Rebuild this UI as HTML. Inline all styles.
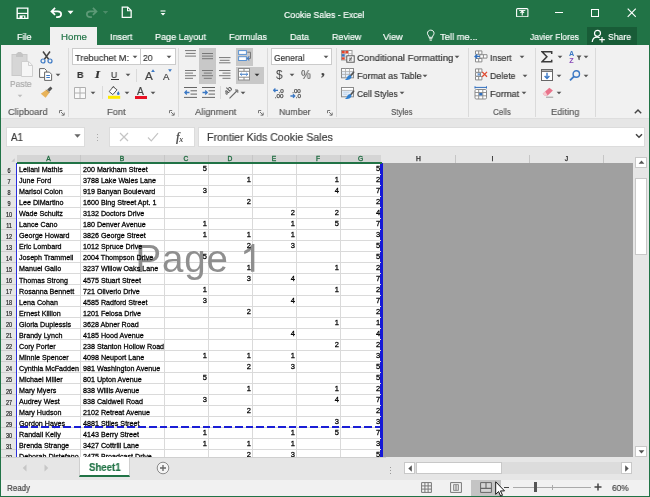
<!DOCTYPE html>
<html><head><meta charset="utf-8"><title>Cookie Sales - Excel</title>
<style>
html,body{margin:0;padding:0;}
body{width:650px;height:497px;overflow:hidden;background:#217346;font-family:"Liberation Sans",sans-serif;}
#win{position:absolute;left:0;top:0;width:650px;height:497px;overflow:hidden;background:#217346;}
.abs{position:absolute;}
/* title */
#title{position:absolute;left:0;top:0;width:650px;height:45px;background:#217346;}
.tt{position:absolute;color:#fff;font-size:11.5px;white-space:nowrap;line-height:14px;}
/* ribbon */
#ribbon{position:absolute;left:1px;top:45px;width:648px;height:73px;background:#f1f1f1;box-shadow:0 1px 0 #dedede;}
/* formula bar area */
#fbar{position:absolute;left:1px;top:118px;width:648px;height:35px;background:#e6e6e6;}
/* sheet area */
#sheet{position:absolute;left:1px;top:153px;width:648px;height:304px;background:#e6e6e6;}
#grid{position:absolute;left:0;top:0;width:650px;height:457px;overflow:hidden;pointer-events:none;}
.hl{position:absolute;left:18px;width:363px;height:1px;background:#dadada;}
.hh{position:absolute;left:1px;width:15px;height:1px;background:#cdcdcd;}
.vl{position:absolute;top:163px;width:1px;height:294px;background:#dadada;}
.rh{position:absolute;left:0.7px;width:16px;height:11px;line-height:12.5px;font-size:6.4px;text-align:center;color:#222;-webkit-text-stroke:0.2px #222;transform:scaleX(0.86);}
.c{position:absolute;height:11px;line-height:12.5px;font-size:7.7px;color:#000;white-space:nowrap;overflow:visible;-webkit-text-stroke:0.28px #000;transform:scaleX(0.93);transform-origin:0 50%;}
.ca{left:18.8px;width:65.5px;}
.cb{left:82.7px;width:88px;}
.n{text-align:right;transform-origin:100% 50%;font-size:8.1px;margin-top:-1.5px;}
.tab{position:absolute;top:29px;color:#fff;font-size:11.5px;line-height:14px;white-space:nowrap;}
#hometab{left:50px;top:27px;width:47px;height:19px;background:#f1f1f1;}
.ch{position:absolute;top:1px;height:9px;line-height:9px;font-size:6.7px;text-align:center;color:#222;-webkit-text-stroke:0.25px #222;}
.ch.sel{color:#1c6a3e;-webkit-text-stroke:0.3px #1c6a3e;}
.chs{position:absolute;top:2px;width:1px;height:8px;background:#c6c6c6;}
.sbtn{position:absolute;background:#fff;border:1px solid #c8c8c8;box-sizing:border-box;}
#tabbar{position:absolute;left:1px;top:457px;width:648px;height:23px;background:#e6e6e6;}
#status{position:absolute;left:1px;top:480px;width:648px;height:16px;background:#f1f1f1;}
.t{position:absolute;white-space:nowrap;line-height:14px;transform-origin:0 50%;-webkit-text-stroke-width:0.18px;}
#rb{position:absolute;left:0;top:0;width:650px;height:120px;}
.box{position:absolute;background:#fff;border:1px solid #cbcbcb;box-sizing:border-box;}
#wm{position:absolute;left:135.4px;top:237.7px;font-size:38.5px;line-height:42px;color:#8f8f8f;white-space:nowrap;letter-spacing:0.9px;word-spacing:-1px;}
#pb{position:absolute;left:20.2px;top:426px;width:360.5px;height:2px;background:repeating-linear-gradient(90deg,#1a1ed6 0,#1a1ed6 7.6px,transparent 7.6px,transparent 10.75px);}
#grid,#rb{will-change:transform;}
.t,.ch,.gs{will-change:transform;}

</style></head>
<body>
<div id="win">
<div id="title">
  <!-- QAT icons -->
  <svg class="abs" style="left:15.500px;top:6.500px" width="13" height="12.500" viewBox="0 0 13 12.500"><path d="M1.200 1.100h10.600v10.300H1.200z" fill="none" stroke="#fff" stroke-width="1.400"/><path d="M1.200 6.400h10.600" stroke="#fff" stroke-width="1.200"/><rect x="3.600" y="8.400" width="5.800" height="3" fill="#fff"/><rect x="6.600" y="9.200" width="1.500" height="1.800" fill="#217346"/></svg>
  <svg class="abs" style="left:48.500px;top:5.500px" width="15" height="14" viewBox="0 0 16 15"><path d="M6.500 2 2.600 5.800l3.900 3.800M2.800 5.800h6.400c2.400 0 3.800 1.400 3.800 3.100 0 1.900-1.500 3-3.800 3H7.600" fill="none" stroke="#fff" stroke-width="1.800" stroke-linejoin="miter"/></svg>
  <svg class="abs" style="left:67px;top:10px" width="7" height="5" viewBox="0 0 7 5"><path d="M.5.8h6L3.5 4.2z" fill="#fff"/></svg>
  <svg class="abs" style="left:84px;top:5.500px" width="15" height="14" viewBox="0 0 16 15"><path d="M9.500 2 13.400 5.800 9.500 9.600M13.200 5.800H6.800C4.400 5.800 3 7.200 3 8.900c0 1.900 1.500 3 3.800 3H8.400" fill="none" stroke="#5d9a77" stroke-width="1.800"/></svg>
  <svg class="abs" style="left:102px;top:10px" width="7" height="5" viewBox="0 0 7 5"><path d="M.8.900h5.400L3.500 4z" fill="#4c8c68"/></svg>
  <svg class="abs" style="left:121px;top:5.900px" width="11.500" height="12.500" viewBox="0 0 12 13"><path d="M1.300 1.200h5.700l3.600 3.600v7H1.300z" fill="none" stroke="#fff" stroke-width="1.300"/><path d="M6.800 1.400v3.600h3.600" fill="none" stroke="#fff" stroke-width="1.100"/></svg>
  <svg class="abs" style="left:159.300px;top:9.500px" width="8" height="7" viewBox="0 0 8 7"><path d="M1.500 1h5" stroke="#fff" stroke-width="1.100"/><path d="M1.600 2.900h4.800L4 5.600z" fill="#fff"/></svg>
  <span class="t" style="left:284.00px;top:8.10px;font-size:9.7px;color:#fff;transform:scaleX(0.899);">Cookie Sales - Excel</span>
  <!-- window buttons -->
  <svg class="abs" style="left:516.200px;top:7.800px" width="12.500" height="9.500" viewBox="0 0 12.500 9.500"><rect x=".6" y=".6" width="11.300" height="8.300" rx="1" fill="none" stroke="#fff" stroke-width="1.100"/><path d="M6.250 7.400V3.300M4.400 4.900 6.250 3.100l1.850 1.800" fill="none" stroke="#fff" stroke-width="1.100"/><path d="M3.200 2.500h6.100" stroke="#fff" stroke-width=".9"/></svg>
  <div class="abs" style="left:554.500px;top:12.100px;width:8.500px;height:1.100px;background:#fff"></div>
  <div class="abs" style="left:590.600px;top:8.600px;width:6.200px;height:6.200px;border:1.100px solid #fff"></div>
  <svg class="abs" style="left:626.500px;top:8px" width="9.500" height="9.500" viewBox="0 0 9.500 9.500"><path d="M.7.700l8.100 8.100M8.800.7.700 8.800" stroke="#fff" stroke-width="1.150"/></svg>
  <!-- tabs -->
  <div class="abs" id="hometab"></div>
  <span class="t" style="left:17.00px;top:29.80px;font-size:9.7px;color:#fff;transform:scaleX(0.928);">File</span>
  <span class="t" style="left:60.50px;top:29.80px;font-size:9.7px;color:#217346;">Home</span>
  <span class="t" style="left:109.50px;top:29.80px;font-size:9.7px;color:#fff;transform:scaleX(0.927);">Insert</span>
  <span class="t" style="left:155.00px;top:29.80px;font-size:9.7px;color:#fff;transform:scaleX(0.936);">Page Layout</span>
  <span class="t" style="left:229.00px;top:29.80px;font-size:9.7px;color:#fff;transform:scaleX(0.940);">Formulas</span>
  <span class="t" style="left:290.00px;top:29.80px;font-size:9.7px;color:#fff;transform:scaleX(0.927);">Data</span>
  <span class="t" style="left:331.70px;top:29.80px;font-size:9.7px;color:#fff;transform:scaleX(0.921);">Review</span>
  <span class="t" style="left:383.40px;top:29.80px;font-size:9.7px;color:#fff;transform:scaleX(0.950);">View</span>
  <svg class="abs" style="left:425.800px;top:29px" width="9.500" height="12.300" viewBox="0 0 10 13"><path d="M5 1.200c-2 0-3.500 1.500-3.500 3.300 0 1.300.8 2.200 1.500 3v1.300h4V7.500c.7-.8 1.500-1.700 1.500-3C8.500 2.700 7 1.200 5 1.200z" fill="none" stroke="#fff" stroke-width="1"/><path d="M3.300 10.300h3.400M3.800 11.800h2.400" stroke="#fff" stroke-width="1"/></svg>
  <span class="t" style="left:439.70px;top:29.80px;font-size:9.7px;color:#fff;transform:scaleX(0.969);">Tell me...</span>
  <span class="t" style="left:530.00px;top:29.80px;font-size:9.7px;color:#fff;transform:scaleX(0.883);">Javier Flores</span>
  <div class="abs" style="left:587px;top:27px;width:50px;height:18px;background:#185c37"></div>
  <svg class="abs" style="left:591px;top:29px" width="15" height="14" viewBox="0 0 15 14"><circle cx="6.500" cy="4.300" r="3" fill="none" stroke="#fff" stroke-width="1.200"/><path d="M1.200 13c.3-3 2.300-4.800 5-4.800 1 0 1.800.2 2.500.6" fill="none" stroke="#fff" stroke-width="1.200"/><path d="M11 8v5.500M8.300 10.700h5.500" stroke="#fff" stroke-width="1.200"/></svg>
  <span class="t" style="left:607.80px;top:29.80px;font-size:9.7px;color:#fff;transform:scaleX(0.889);">Share</span>
</div>

<div id="fbar">
  <div class="abs" style="left:5px;top:9px;width:78.500px;height:19.500px;background:#fff;border:1px solid #dcdcdc;box-sizing:border-box"></div>
  <svg class="abs" style="left:72.500px;top:16px" width="7" height="4" viewBox="0 0 7 4"><path d="M.4.300h6.200L3.500 3.700z" fill="#666"/></svg>
  <div class="abs" style="left:95.500px;top:15.5px;width:1.200px;height:1.200px;background:#aaa;box-shadow:0 3px #aaa,0 6px #aaa"></div>
  <div class="abs" style="left:108px;top:9px;width:86px;height:19.500px;background:#fff;border:1px solid #dcdcdc;box-sizing:border-box"></div>
  <svg class="abs" style="left:117.500px;top:14px" width="10" height="10" viewBox="0 0 10 10"><path d="M1 1l8 8M9 1 1 9" stroke="#c4c4c4" stroke-width="1.200"/></svg>
  <svg class="abs" style="left:145.500px;top:14px" width="12" height="10" viewBox="0 0 12 10"><path d="M1 5.500 4.300 8.800 11 1.200" fill="none" stroke="#c4c4c4" stroke-width="1.200"/></svg>
  <div class="abs gs" style="left:175px;top:12px;font-family:'Liberation Serif',serif;font-style:italic;font-weight:bold;font-size:11.500px;line-height:14px;color:#555">f<span style="font-size:8px;position:relative;top:1px;left:-0.500px">x</span></div>
  <div class="abs" style="left:197px;top:9px;width:447px;height:19.500px;background:#fff;border:1px solid #dcdcdc;box-sizing:border-box"></div>
  <svg class="abs" style="left:634px;top:15px" width="8" height="6" viewBox="0 0 8 6"><path d="M1 1.200l3 3L7 1.200" fill="none" stroke="#444" stroke-width="1.500"/></svg>
</div>
<span class="t" style="left:10.60px;top:130.70px;font-size:10.0px;color:#3a3a3a;transform:scaleX(0.965);">A1</span>
<span class="t" style="left:207.00px;top:129.90px;font-size:10.9px;color:#3a3a3a;transform:scaleX(0.976);">Frontier Kids Cookie Sales</span>

<div id="sheet">
  <!-- column headers: coordinates relative to sheet (left:1, top:153) -->
  <div class="abs" style="left:0;top:0;width:632px;height:10px;background:#e6e6e6"></div>
  <div class="abs" style="left:16px;top:2px;width:364px;height:8px;background:#d5d5d5"></div>
  <svg class="abs" style="left:10px;top:4.800px" width="4" height="4" viewBox="0 0 4 4"><path d="M3.700.300v3.400H.3z" fill="#c4c4c4"/></svg>
  <div class="ch sel" style="left:16px;width:63px">A</div>
  <div class="ch sel" style="left:79px;width:84px">B</div>
  <div class="ch sel" style="left:163px;width:44px">C</div>
  <div class="ch sel" style="left:207px;width:44px">D</div>
  <div class="ch sel" style="left:251px;width:44px">E</div>
  <div class="ch sel" style="left:295px;width:44px">F</div>
  <div class="ch sel" style="left:339px;width:41px">G</div>
  <div class="ch" style="left:381px;width:73px">H</div>
  <div class="ch" style="left:455px;width:73px">I</div>
  <div class="ch" style="left:529px;width:73px">J</div>
  <div class="chs" style="left:79px"></div><div class="chs" style="left:163px"></div><div class="chs" style="left:207px"></div><div class="chs" style="left:251px"></div><div class="chs" style="left:295px"></div><div class="chs" style="left:339px"></div>
  <div class="chs" style="left:454px"></div><div class="chs" style="left:528px"></div><div class="chs" style="left:602px"></div>
  <!-- header underline green -->
  <div class="abs" style="left:16px;top:8.800px;width:365px;height:1.900px;background:#217346;z-index:2"></div>
  <!-- row header column -->
  <div class="abs" style="left:0;top:10px;width:15px;height:294px;background:#e6e6e6"></div>
  <!-- white cells -->
  <div class="abs" style="left:16px;top:10px;width:364px;height:294px;background:#fff"></div>
  <!-- grey out-of-print area -->
  <div class="abs" style="left:381px;top:10px;width:251px;height:294px;background:#a0a0a0"></div>
  <!-- page-break borders -->
  <div class="abs" style="left:15.100px;top:10px;width:1.300px;height:294px;background:#2c30dc"></div>
  <div class="abs" style="left:379px;top:10px;width:2.500px;height:294px;background:#1418d8"></div>
  <!-- vertical scrollbar -->
  <div class="abs" style="left:632px;top:0;width:16px;height:304px;background:#e6e6e6"></div>
  <div class="sbtn" style="left:634.300px;top:3.500px;width:11.700px;height:11.500px"></div>
  <svg class="abs" style="left:636.800px;top:7.200px" width="7" height="4" viewBox="0 0 7 4"><path d="M.6 3.700h5.800L3.500.500z" fill="#555"/></svg>
  <div class="sbtn" style="left:634.300px;top:25.300px;width:11.700px;height:77px"></div>
  <div class="sbtn" style="left:634.300px;top:292.700px;width:11.700px;height:11.300px"></div>
  <svg class="abs" style="left:636.800px;top:297px" width="7" height="4" viewBox="0 0 7 4"><path d="M.6.300h5.800L3.500 3.500z" fill="#555"/></svg>
</div>

<div id="tabbar">
  <svg class="abs" style="left:20.500px;top:7px" width="5" height="8" viewBox="0 0 5 8"><path d="M4.500.5v7L.7 4z" fill="#c6c6c6"/></svg>
  <svg class="abs" style="left:43px;top:7px" width="5" height="8" viewBox="0 0 5 8"><path d="M.5.500v7L4.300 4z" fill="#c6c6c6"/></svg>
  <div class="abs" style="left:0;top:0;width:385px;height:1px;background:#d0d0d0"></div>
  <div class="abs" style="left:78.300px;top:0;width:51.200px;height:19.500px;background:#fff;border-left:1px solid #cfcfcf;border-right:1px solid #cfcfcf;border-bottom:2px solid #217346;box-sizing:border-box"></div>
  
  <svg class="abs" style="left:155px;top:4px" width="14" height="14" viewBox="0 0 14 14"><circle cx="7" cy="7" r="5.800" fill="#f4f4f4" stroke="#8a8a8a" stroke-width="1"/><path d="M7 4v6M4 7h6" stroke="#666" stroke-width="1.300"/></svg>
  <!-- h scrollbar -->
  <div class="abs" style="left:389px;top:10px;width:1px;height:1px;background:#999;box-shadow:0 3px #999,0 6px #999"></div>
  <div class="abs" style="left:403px;top:5px;width:228px;height:12px;background:#dcdcdc"></div>
  <div class="sbtn" style="left:403px;top:5px;width:11px;height:12px"></div>
  <svg class="abs" style="left:407px;top:8px" width="4" height="7" viewBox="0 0 4 7"><path d="M3.800.300v6.400L.300 3.500z" fill="#555"/></svg>
  <div class="sbtn" style="left:415px;top:5px;width:86px;height:12px"></div>
  <div class="sbtn" style="left:620px;top:5px;width:11px;height:12px"></div>
  <svg class="abs" style="left:624px;top:8px" width="4" height="7" viewBox="0 0 4 7"><path d="M.2.300v6.400L3.700 3.500z" fill="#555"/></svg>
</div>

<div id="status">
  
  <!-- view icons -->
  <div class="abs" style="left:470px;top:0;width:29.500px;height:16px;background:#c4c4c4"></div>
  <svg class="abs" style="left:419.700px;top:2.200px" width="11" height="11" viewBox="0 0 11 11"><path d="M.6.600h9.800v9.800H.6zM.6 3.900h9.800M.6 7.100h9.800M3.900.6v9.800M7.100.6v9.800" fill="#f4f4f4" stroke="#777" stroke-width="1"/></svg>
  <svg class="abs" style="left:449.200px;top:2.200px" width="12" height="11" viewBox="0 0 12 11"><path d="M.6.600h10.800v9.800H.6z" fill="#f4f4f4" stroke="#777" stroke-width="1"/><path d="M3.500 2.600h5v5.800h-5zM5.200 2.600v5.800M6.800 2.600v5.800" fill="none" stroke="#888" stroke-width=".9"/></svg>
  <svg class="abs" style="left:478.700px;top:2.200px" width="12" height="11" viewBox="0 0 12 11"><path d="M.6.600h10.800v9.800H.6z" fill="#d4d4d4" stroke="#666" stroke-width="1"/><path d="M6 .6v5.600M.6 6.400h10.800" fill="none" stroke="#666" stroke-width="1.100"/></svg>
  <!-- cursor -->
  <svg class="abs" style="left:494px;top:1px" width="11" height="16" viewBox="0 0 11 16"><path d="M.7.800v12.500l2.900-2.700 2 4.500 1.900-.8-2-4.400h4z" fill="#fff" stroke="#000" stroke-width=".9"/></svg>
  <!-- zoom slider -->
  <div class="abs" style="left:503px;top:6.500px;width:5px;height:1.500px;background:#444"></div>
  <div class="abs" style="left:512px;top:7px;width:78px;height:1px;background:#aaa"></div>
  <div class="abs" style="left:551px;top:5px;width:1px;height:5px;background:#aaa"></div>
  <div class="abs" style="left:533px;top:2px;width:3px;height:10px;background:#555"></div>
  <svg class="abs" style="left:593px;top:3px" width="8" height="8" viewBox="0 0 8 8"><path d="M4 .5v7M.5 4h7" stroke="#444" stroke-width="1.500"/></svg>
  
</div>

<span class="t" style="left:89.20px;top:460.30px;font-size:10.8px;color:#217346;font-weight:bold;transform:scaleX(0.892);">Sheet1</span>
<span class="t" style="left:6.90px;top:480.70px;font-size:9.7px;color:#444;transform:scaleX(0.820);">Ready</span>
<span class="t" style="left:612.20px;top:480.60px;font-size:9.5px;color:#444;transform:scaleX(0.878);">60%</span>

<div id="ribbon"></div>
<div id="rb">
<!-- ===== Clipboard ===== -->
<svg class="abs" style="left:11px;top:51px" width="23" height="27" viewBox="0 0 23 27">
  <rect x="1" y="3.500" width="15" height="21" fill="#d6d6d6" stroke="#c9c9c9" stroke-width="1"/>
  <path d="M5 3.500c0-1.500 1.500-1 2-2.500h3c.5 1.500 2 1 2 2.500V6H5z" fill="#c4c4c4"/>
  <path d="M10.500 10.500h7.200l3.800 3.800v11.200h-11z" fill="#f6f6f6" stroke="#cfcfcf" stroke-width="1"/>
  <path d="M17.500 10.700v3.800h3.800" fill="none" stroke="#cfcfcf" stroke-width="1"/>
</svg>
<span class="t" style="left:10.00px;top:76.90px;font-size:9.8px;color:#a8a8a8;transform:scaleX(0.862);">Paste</span>
<svg class="abs" style="left:17.3px;top:93.7px" width="6" height="4" viewBox="0 0 6 4"><path d="M.6.700h4.800L3 3.350z" fill="#bdbdbd"/></svg>
<!-- scissors -->
<svg class="abs" style="left:39.500px;top:50.500px" width="13" height="13" viewBox="0 0 13 13">
  <path d="M3 .5 8.600 8.200M10 .5 4.400 8.200" fill="none" stroke="#444" stroke-width="1.500"/>
  <circle cx="3" cy="10" r="2" fill="none" stroke="#3b78c4" stroke-width="1.200"/>
  <circle cx="10" cy="10" r="2" fill="none" stroke="#3b78c4" stroke-width="1.200"/>
</svg>
<!-- copy -->
<svg class="abs" style="left:39px;top:68px" width="14" height="13" viewBox="0 0 14 13">
  <path d="M.6.600h5l2 2v6.800h-7z" fill="#fff" stroke="#666" stroke-width="1"/>
  <path d="M5.600 4.100h4.800l2.200 2.200v6.100h-7z" fill="#fff" stroke="#666" stroke-width="1"/>
  <path d="M7.300 7.500h3.600M7.300 9.500h3.600" stroke="#3b78c4" stroke-width="1"/>
</svg>
<svg class="abs" style="left:55.4px;top:73.0px" width="6" height="4" viewBox="0 0 6 4"><path d="M.6.700h4.800L3 3.350z" fill="#555"/></svg>
<!-- format painter -->
<svg class="abs" style="left:40px;top:86px" width="13" height="13" viewBox="0 0 13 13">
  <path d="M7.200 3.400 10.600.600l1.800 1.900-3 3.200z" fill="#555"/>
  <path d="M6.400 3.800 9.400 6.800 5.600 11.800.8 7.800z" fill="#e8b35a"/>
  <path d="M6.400 3.800 9.400 6.800" stroke="#7a5a22" stroke-width=".8"/>
</svg>
<span class="t" style="left:8.10px;top:104.80px;font-size:9.8px;color:#595959;transform:scaleX(0.944);">Clipboard</span>
<svg class="abs" style="left:59.0px;top:109.5px" width="6" height="6" viewBox="0 0 6 6"><path d="M.5 3.200V.5h2.700" fill="none" stroke="#777" stroke-width="1"/><path d="M2 2l3 3M5.200 2.600v2.600H2.600" fill="none" stroke="#777" stroke-width="1"/></svg>
<div class="abs" style="left:68.0px;top:48.0px;width:1px;height:69.0px;background:#dadada"></div>
<!-- ===== Font ===== -->
<div class="box" style="left:72px;top:48px;width:69px;height:17.300px"></div>
<div class="box" style="left:140px;top:48px;width:36px;height:17.300px"></div>
<span class="t" style="left:74.90px;top:50.50px;font-size:9.8px;color:#333;transform:scaleX(0.941);">Trebuchet M:</span>
<svg class="abs" style="left:131.8px;top:55.2px" width="6" height="4" viewBox="0 0 6 4"><path d="M.6.700h4.800L3 3.350z" fill="#555"/></svg>
<span class="t" style="left:142.90px;top:50.50px;font-size:9.8px;color:#333;transform:scaleX(0.871);">20</span>
<svg class="abs" style="left:166.0px;top:55.2px" width="6" height="4" viewBox="0 0 6 4"><path d="M.6.700h4.800L3 3.350z" fill="#555"/></svg>
<span class="t" style="left:77.00px;top:68.30px;font-size:9.8px;color:#333;font-weight:bold;transform:scaleX(0.918);">B</span>
<span class="t" style="left:94.80px;top:68.30px;font-size:10.5px;color:#333;font-family:'Liberation Serif',serif;font-weight:bold;font-style:italic;transform:scaleX(1.224);">I</span>
<span class="t" style="left:111.40px;top:67.50px;font-size:9.3px;color:#333;transform:scaleX(0.923);">U</span>
<div class="abs" style="left:111px;top:78.700px;width:7.500px;height:1px;background:#333"></div>
<svg class="abs" style="left:124.7px;top:73.0px" width="6" height="4" viewBox="0 0 6 4"><path d="M.6.700h4.800L3 3.350z" fill="#555"/></svg>
<div class="abs" style="left:135.8px;top:69.0px;width:1px;height:13.0px;background:#dadada"></div>
<span class="t" style="left:144.80px;top:68.60px;font-size:11.2px;color:#444;transform:scaleX(1.044);">A</span>
<svg class="abs" style="left:150.800px;top:68.600px" width="4" height="3" viewBox="0 0 4 3"><path d="M.1 2.900h3.800L2 .200z" fill="#3b78c4"/></svg>
<span class="t" style="left:162.80px;top:69.60px;font-size:9.0px;color:#444;transform:scaleX(1.066);">A</span>
<svg class="abs" style="left:168.200px;top:68.800px" width="4" height="3" viewBox="0 0 4 3"><path d="M.1.200h3.800L2 2.900z" fill="#3b78c4"/></svg>
<!-- borders -->
<svg class="abs" style="left:74px;top:86.500px" width="12" height="12" viewBox="0 0 12 12"><path d="M.5.500h11v11H.5zM6 .5v11M.5 6h11" fill="#f9f9f9" stroke="#b0b0b0" stroke-width="1"/></svg>
<svg class="abs" style="left:90.1px;top:90.7px" width="6" height="4" viewBox="0 0 6 4"><path d="M.6.700h4.800L3 3.350z" fill="#555"/></svg>
<div class="abs" style="left:101.5px;top:86.0px;width:1px;height:13.0px;background:#dadada"></div>
<!-- fill color -->
<svg class="abs" style="left:108px;top:86px" width="13" height="13" viewBox="0 0 13 13">
  <path d="M5.200.800 1.200 5.600l3.600 3 4.200-4.800z" fill="#fff" stroke="#555" stroke-width="1"/>
  <path d="M4.200 1.600c.6-1.300 2-1.300 2.300 0" fill="none" stroke="#555" stroke-width=".9"/>
  <path d="M10.300 5.200c.9 1.300 1.300 2 1.300 2.600a1.300 1.300 0 0 1-2.600 0c0-.6.400-1.300 1.300-2.600z" fill="#3b78c4"/>
  <rect x="0" y="9.800" width="12.200" height="3" fill="#ffeb00"/>
</svg>
<svg class="abs" style="left:124.0px;top:90.7px" width="6" height="4" viewBox="0 0 6 4"><path d="M.6.700h4.800L3 3.350z" fill="#555"/></svg>
<!-- font color -->
<span class="t" style="left:137.30px;top:85.30px;font-size:10.2px;color:#444;transform:scaleX(1.014);">A</span>
<div class="abs" style="left:134.500px;top:95.800px;width:12.200px;height:3px;background:#e81123"></div>
<svg class="abs" style="left:150.0px;top:90.7px" width="6" height="4" viewBox="0 0 6 4"><path d="M.6.700h4.800L3 3.350z" fill="#555"/></svg>
<span class="t" style="left:107.00px;top:104.80px;font-size:9.8px;color:#595959;transform:scaleX(0.948);">Font</span>
<svg class="abs" style="left:169.0px;top:109.5px" width="6" height="6" viewBox="0 0 6 6"><path d="M.5 3.200V.5h2.700" fill="none" stroke="#777" stroke-width="1"/><path d="M2 2l3 3M5.200 2.600v2.600H2.600" fill="none" stroke="#777" stroke-width="1"/></svg>
<div class="abs" style="left:177.8px;top:48.0px;width:1px;height:69.0px;background:#dadada"></div>
<!-- ===== Alignment ===== -->
<div class="abs" style="left:199px;top:48px;width:17px;height:35.500px;background:#c8c8c8"></div>
<div class="abs" style="left:236px;top:48px;width:17px;height:17.500px;background:#c8c8c8"></div>
<div class="abs" style="left:236px;top:66.500px;width:27.500px;height:17px;background:#c8c8c8"></div>
<svg class="abs" style="left:184.500px;top:49.500px" width="11.500" height="7" viewBox="0 0 11.500 7"><path d="M0 .6h11.500M.8 3.400h9.800M0 6.100h11.500" stroke="#777" stroke-width="1"/></svg>
<svg class="abs" style="left:201.500px;top:53px" width="11.500" height="7" viewBox="0 0 11.500 7"><path d="M0 .5h11.500M0 3.100h11.500M0 5.700h11.500" stroke="#777" stroke-width="1"/></svg>
<svg class="abs" style="left:219px;top:56.600px" width="11.500" height="7" viewBox="0 0 11.500 7"><path d="M0 .6h11.500M.8 3.300h9.800M0 5.800h11.500" stroke="#777" stroke-width="1"/></svg>
<!-- wrap text -->
<svg class="abs" style="left:238px;top:49.800px" width="14" height="12" viewBox="0 0 14 12">
  <rect x=".6" y=".6" width="7.800" height="3.800" fill="#fff" stroke="#5b93d3" stroke-width="1"/>
  <rect x=".6" y="6.700" width="7.800" height="3.800" fill="#fff" stroke="#5b93d3" stroke-width="1"/>
  <path d="M9.300 2.200h3.200v6.200H10" fill="none" stroke="#777" stroke-width="1"/><path d="M11.300 6.400 9.300 8.400l2 2" fill="none" stroke="#3b78c4" stroke-width="1.100"/>
</svg>
<svg class="abs" style="left:184.500px;top:70.200px" width="11.500" height="9" viewBox="0 0 11.500 9"><path d="M0 .5h11.500M0 3.100h8M0 5.700h11.500M0 8.300h8" stroke="#777" stroke-width="1"/></svg>
<svg class="abs" style="left:201.500px;top:70.200px" width="11.500" height="9" viewBox="0 0 11.500 9"><path d="M0 .5h11.500M1.800 3.100h8M0 5.700h11.500M1.800 8.300h8" stroke="#777" stroke-width="1"/></svg>
<svg class="abs" style="left:219px;top:70.200px" width="11.500" height="9" viewBox="0 0 11.500 9"><path d="M0 .5h11.500M3.500 3.100h8M0 5.700h11.500M3.500 8.300h8" stroke="#777" stroke-width="1"/></svg>
<!-- merge & center -->
<svg class="abs" style="left:238.300px;top:68px" width="12" height="12.500" viewBox="0 0 12 12.500">
  <rect x=".5" y=".5" width="11" height="11.500" fill="#fff" stroke="#8a8a8a" stroke-width="1"/>
  <path d="M.5 3.300h11M.5 9.200h11M6 .500v2.800M6 9.200v2.800" stroke="#8a8a8a" stroke-width="1"/>
  <path d="M2.300 6.250h7.400M3.700 4.900 2.300 6.250l1.400 1.350M8.300 4.900 9.700 6.250 8.300 7.600" fill="none" stroke="#3b78c4" stroke-width="1"/>
</svg>
<svg class="abs" style="left:254.2px;top:73.0px" width="6" height="4" viewBox="0 0 6 4"><path d="M.6.700h4.800L3 3.350z" fill="#333"/></svg>
<!-- indent icons -->
<svg class="abs" style="left:184px;top:87px" width="13" height="11" viewBox="0 0 13 11"><path d="M0 .5h13M6.500 3.800H13M6.500 7.100H13M0 10.400h13" stroke="#666" stroke-width="1"/><path d="M5.500 5.500H1M2.800 3.500.8 5.500l2 2" fill="none" stroke="#3b78c4" stroke-width="1.300"/></svg>
<svg class="abs" style="left:201.500px;top:87px" width="13" height="11" viewBox="0 0 13 11"><path d="M0 .5h13M6.500 3.800H13M6.500 7.100H13M0 10.400h13" stroke="#666" stroke-width="1"/><path d="M.5 5.500H5M3.200 3.500l2 2-2 2" fill="none" stroke="#3b78c4" stroke-width="1.300"/></svg>
<div class="abs" style="left:219.6px;top:86.0px;width:1px;height:13.0px;background:#dadada"></div>
<!-- orientation -->
<svg class="abs" style="left:224.800px;top:86.300px" width="14" height="13" viewBox="0 0 14 13">
  <text x="0" y="0" font-family="Liberation Sans, sans-serif" font-size="7.500" font-weight="bold" fill="#555" transform="translate(1.600 9.300) rotate(-45)">ab</text>
  <path d="M4.500 12.300 12.300 4.500" fill="none" stroke="#666" stroke-width="1.100"/><path d="M12.800 6.800V4h-2.800" fill="none" stroke="#666" stroke-width="1"/>
</svg>
<svg class="abs" style="left:240.2px;top:90.7px" width="6" height="4" viewBox="0 0 6 4"><path d="M.6.700h4.800L3 3.350z" fill="#555"/></svg>
<span class="t" style="left:194.80px;top:104.80px;font-size:9.8px;color:#595959;transform:scaleX(0.948);">Alignment</span>
<svg class="abs" style="left:258.0px;top:109.5px" width="6" height="6" viewBox="0 0 6 6"><path d="M.5 3.200V.5h2.700" fill="none" stroke="#777" stroke-width="1"/><path d="M2 2l3 3M5.200 2.600v2.600H2.600" fill="none" stroke="#777" stroke-width="1"/></svg>
<div class="abs" style="left:266.6px;top:48.0px;width:1px;height:69.0px;background:#dadada"></div>
<!-- ===== Number ===== -->
<div class="box" style="left:270.500px;top:48px;width:61px;height:17.300px"></div>
<span class="t" style="left:273.50px;top:50.50px;font-size:9.8px;color:#333;transform:scaleX(0.872);">General</span>
<svg class="abs" style="left:322.6px;top:55.2px" width="6" height="4" viewBox="0 0 6 4"><path d="M.6.700h4.800L3 3.350z" fill="#555"/></svg>
<span class="t" style="left:276.30px;top:68.00px;font-size:12.0px;color:#444;transform:scaleX(0.959);-webkit-text-stroke-width:0;">$</span>
<svg class="abs" style="left:289.0px;top:73.0px" width="6" height="4" viewBox="0 0 6 4"><path d="M.6.700h4.800L3 3.350z" fill="#555"/></svg>
<span class="t" style="left:301.30px;top:68.30px;font-size:12.0px;color:#444;transform:scaleX(0.937);-webkit-text-stroke-width:0;">%</span>
<span class="t" style="left:320.50px;top:63.20px;font-size:15.0px;color:#444;font-family:'Liberation Serif',serif;font-weight:bold;transform:scaleX(1.013);">,</span>
<!-- inc/dec decimal -->
<svg class="abs" style="left:272.500px;top:86.500px" width="13" height="12" viewBox="0 0 13 12">
  <path d="M.6 3.300h4.400M2.400 1.500.6 3.300 2.400 5.100" fill="none" stroke="#3b78c4" stroke-width="1.300"/>
  <text x="5.600" y="5.600" font-family="Liberation Sans, sans-serif" font-size="6.200" fill="#444" stroke="#444" stroke-width=".25">.0</text>
  <text x="1.800" y="11" font-family="Liberation Sans, sans-serif" font-size="6.200" fill="#444" stroke="#444" stroke-width=".25">.00</text>
</svg>
<svg class="abs" style="left:290px;top:86.500px" width="13" height="12" viewBox="0 0 13 12">
  <text x="2.200" y="5.600" font-family="Liberation Sans, sans-serif" font-size="6.200" fill="#444" stroke="#444" stroke-width=".25">.00</text>
  <path d="M.4 9h4.400M3 7.200 4.800 9 3 10.800" fill="none" stroke="#3b78c4" stroke-width="1.300"/>
  <text x="5.800" y="11" font-family="Liberation Sans, sans-serif" font-size="6.200" fill="#444" stroke="#444" stroke-width=".25">.0</text>
</svg>
<span class="t" style="left:278.80px;top:104.80px;font-size:9.8px;color:#595959;transform:scaleX(0.904);">Number</span>
<svg class="abs" style="left:326.5px;top:109.5px" width="6" height="6" viewBox="0 0 6 6"><path d="M.5 3.200V.5h2.700" fill="none" stroke="#777" stroke-width="1"/><path d="M2 2l3 3M5.200 2.600v2.600H2.600" fill="none" stroke="#777" stroke-width="1"/></svg>
<div class="abs" style="left:335.7px;top:48.0px;width:1px;height:69.0px;background:#dadada"></div>
<!-- ===== Styles ===== -->
<svg class="abs" style="left:341px;top:50px" width="14" height="13" viewBox="0 0 14 13">
  <rect x=".5" y=".5" width="10.500" height="9.500" fill="#fff" stroke="#9a9a9a" stroke-width="1"/>
  <path d="M.5 3.700h10.500M.5 6.900h10.500M4 .5v9.500M7.500.5v9.500" stroke="#b5b5b5" stroke-width=".8"/>
  <rect x=".9" y=".9" width="2.800" height="2.500" fill="#e0452c"/><rect x="4.400" y=".9" width="2.800" height="2.500" fill="#e0452c"/><rect x=".9" y="4.100" width="2.800" height="2.500" fill="#3b78c4"/><rect x=".9" y="7.300" width="2.800" height="2.300" fill="#e0452c"/>
  <rect x="5.800" y="5.800" width="7.400" height="6.400" fill="#fff" stroke="#555" stroke-width="1"/><path d="M7.800 8.200h3.400M7.800 10h3.400M10.600 7.300 8.400 10.900" stroke="#555" stroke-width=".8"/>
</svg>
<span class="t" style="left:356.80px;top:50.50px;font-size:9.8px;color:#333;transform:scaleX(0.978);">Conditional Formatting</span>
<svg class="abs" style="left:454.3px;top:55.2px" width="6" height="4" viewBox="0 0 6 4"><path d="M.6.700h4.800L3 3.350z" fill="#555"/></svg>
<svg class="abs" style="left:341px;top:68px" width="14" height="13" viewBox="0 0 14 13">
  <rect x=".5" y=".5" width="12" height="9.300" fill="#e6eef8" stroke="#8a8a8a" stroke-width="1"/>
  <rect x="1" y="1" width="11" height="2.200" fill="#fff"/>
  <path d="M.5 3.400h12M.5 6.400h12M4.500.5v9.300M8.500.5v9.300" stroke="#a9a9a9" stroke-width=".8"/>
  <path d="M12.600 4.200 9.300 8.300" stroke="#555" stroke-width="1.700" stroke-linecap="round"/><path d="M9.600 7.400c-1.400-.4-2.800.3-3.300 1.600-.4 1.200-.9 2-2.500 2.700 2.600.7 5.200.2 6.300-1.600.5-.9.300-2.100-.5-2.700z" fill="#2f7fd0"/>
</svg>
<span class="t" style="left:356.80px;top:68.50px;font-size:9.8px;color:#333;transform:scaleX(0.923);">Format as Table</span>
<svg class="abs" style="left:422.3px;top:73.5px" width="6" height="4" viewBox="0 0 6 4"><path d="M.6.700h4.800L3 3.350z" fill="#555"/></svg>
<svg class="abs" style="left:341px;top:86.500px" width="14" height="13" viewBox="0 0 14 13">
  <rect x=".5" y=".5" width="12" height="9.300" fill="#e6eef8" stroke="#8a8a8a" stroke-width="1"/>
  <rect x="1" y="1" width="11" height="2.200" fill="#fff"/>
  <path d="M.5 3.400h12" stroke="#a9a9a9" stroke-width=".8"/><path d="M2.300 5.200h6M2.300 7.200h4" stroke="#b9cfe8" stroke-width=".9"/>
  <path d="M12.600 4.200 9.300 8.300" stroke="#555" stroke-width="1.700" stroke-linecap="round"/><path d="M9.600 7.400c-1.400-.4-2.800.3-3.300 1.600-.4 1.200-.9 2-2.500 2.700 2.600.7 5.200.2 6.300-1.600.5-.9.300-2.100-.5-2.700z" fill="#2f7fd0"/>
</svg>
<span class="t" style="left:356.80px;top:86.50px;font-size:9.8px;color:#333;transform:scaleX(0.877);">Cell Styles</span>
<svg class="abs" style="left:398.7px;top:90.7px" width="6" height="4" viewBox="0 0 6 4"><path d="M.6.700h4.800L3 3.350z" fill="#555"/></svg>
<span class="t" style="left:391.00px;top:104.80px;font-size:9.8px;color:#595959;transform:scaleX(0.809);">Styles</span>
<div class="abs" style="left:468.0px;top:48.0px;width:1px;height:69.0px;background:#dadada"></div>
<!-- ===== Cells ===== -->
<svg class="abs" style="left:474px;top:50px" width="14" height="13" viewBox="0 0 14 13">
  <path d="M1.500.9h6.400v3.400H1.500zM4.700.9v3.400M1.500 8.500h6.400v3.400H1.500zM4.700 8.500v3.400" fill="#fff" stroke="#8a8a8a" stroke-width="1"/>
  <path d="M5.800 4.700h7.200v3.400H5.800zM9.400 4.700v3.400" fill="#fff" stroke="#8a8a8a" stroke-width="1"/>
  <path d="M6 6.400H1.200M3.200 4.400 1.100 6.400l2.100 2" fill="none" stroke="#2f6fc0" stroke-width="1.400"/>
</svg>
<span class="t" style="left:490.00px;top:50.50px;font-size:9.8px;color:#333;transform:scaleX(0.881);">Insert</span>
<svg class="abs" style="left:519.3px;top:55.2px" width="6" height="4" viewBox="0 0 6 4"><path d="M.6.700h4.800L3 3.350z" fill="#555"/></svg>
<svg class="abs" style="left:474px;top:68px" width="14" height="13" viewBox="0 0 14 13">
  <path d="M1.500.9h6.400v3.400H1.500zM4.700.9v3.400M1.500 8.500h6.400v3.400H1.500zM4.700 8.500v3.400" fill="#fff" stroke="#8a8a8a" stroke-width="1"/>
  <path d="M1.500 4.700h5v3.400h-5z" fill="#fff" stroke="#8a8a8a" stroke-width="1"/><rect x="3.600" y="5.300" width="2.400" height="2.200" fill="#6e9ad2"/>
  <path d="M8.200 3.900l4.800 4.800M13 3.900 8.200 8.700" stroke="#e0492f" stroke-width="1.300"/>
</svg>
<span class="t" style="left:490.00px;top:68.50px;font-size:9.8px;color:#333;transform:scaleX(0.900);">Delete</span>
<svg class="abs" style="left:522.0px;top:73.5px" width="6" height="4" viewBox="0 0 6 4"><path d="M.6.700h4.800L3 3.350z" fill="#555"/></svg>
<svg class="abs" style="left:474px;top:86.300px" width="14" height="14" viewBox="0 0 14 14">
  <rect x="1" y="3.500" width="11.500" height="9.500" rx="1.200" fill="#fff" stroke="#8a8a8a" stroke-width="1"/>
  <path d="M1 6.500h11.500M1 9.800h11.500M4.700 3.500v9.500M8.800 3.500v9.500" stroke="#8a8a8a" stroke-width=".9"/>
  <rect x="5.200" y="7" width="3.100" height="2.400" fill="#2f6fc0"/>
  <path d="M1 1.400h11.500M1 .3v2.200M12.500.3v2.200" stroke="#2f6fc0" stroke-width="1"/>
</svg>
<span class="t" style="left:490.00px;top:86.50px;font-size:9.8px;color:#333;transform:scaleX(0.944);">Format</span>
<svg class="abs" style="left:520.6px;top:90.7px" width="6" height="4" viewBox="0 0 6 4"><path d="M.6.700h4.800L3 3.350z" fill="#555"/></svg>
<span class="t" style="left:492.60px;top:104.80px;font-size:9.8px;color:#595959;transform:scaleX(0.817);">Cells</span>
<div class="abs" style="left:534.5px;top:48.0px;width:1px;height:69.0px;background:#dadada"></div>
<!-- ===== Editing ===== -->
<svg class="abs" style="left:541px;top:51px" width="12" height="12" viewBox="0 0 12 12"><path d="M10.700 2.900V.800H1.100l4.800 5-4.800 5h9.600V8.700" fill="none" stroke="#3a3a3a" stroke-width="1.500"/></svg>
<svg class="abs" style="left:556.9px;top:55.2px" width="6" height="4" viewBox="0 0 6 4"><path d="M.6.700h4.800L3 3.350z" fill="#555"/></svg>
<svg class="abs" style="left:568.500px;top:49.800px" width="13" height="14" viewBox="0 0 13 14">
  <text x="0" y="6" font-family="Liberation Sans, sans-serif" font-size="7.200" font-weight="bold" fill="#3b78c4">A</text>
  <text x="0.300" y="13" font-family="Liberation Sans, sans-serif" font-size="7.200" font-weight="bold" fill="#8a4bb8">Z</text>
  <path d="M7.500 5.500h5L10.700 7.700v2.600l-1.400-.8V7.700z" fill="#555"/>
</svg>
<svg class="abs" style="left:583.0px;top:55.2px" width="6" height="4" viewBox="0 0 6 4"><path d="M.6.700h4.800L3 3.350z" fill="#555"/></svg>
<svg class="abs" style="left:541px;top:68.500px" width="12" height="12" viewBox="0 0 12 12">
  <rect x=".5" y=".5" width="11" height="11" fill="#fff" stroke="#666" stroke-width="1"/><path d="M.5 2.200h11" stroke="#666" stroke-width="1.400"/>
  <path d="M6 3.800v5.500M3.600 7 6 9.500 8.400 7" fill="none" stroke="#3b78c4" stroke-width="1.400"/>
</svg>
<svg class="abs" style="left:555.6px;top:73.5px" width="6" height="4" viewBox="0 0 6 4"><path d="M.6.700h4.800L3 3.350z" fill="#555"/></svg>
<svg class="abs" style="left:568.500px;top:69.500px" width="12" height="11" viewBox="0 0 12 11"><circle cx="7.300" cy="4" r="3.200" fill="none" stroke="#3b78c4" stroke-width="1.400"/><path d="M5 6.300 1 10.300" stroke="#3b78c4" stroke-width="1.700"/></svg>
<svg class="abs" style="left:583.0px;top:73.5px" width="6" height="4" viewBox="0 0 6 4"><path d="M.6.700h4.800L3 3.350z" fill="#555"/></svg>
<svg class="abs" style="left:541.500px;top:87.300px" width="12" height="11" viewBox="0 0 12 11">
  <path d="M7.300.7 10.900 3.400 5.700 8.600 2.600 8.600.7 6.700z" fill="#e9738a"/><path d="M.7 6.700 2.600 8.600H5.700L3.200 4.400z" fill="#f6c9d0"/>
  <path d="M4 10.200h7.200" stroke="#9a9a9a" stroke-width="1"/>
</svg>
<svg class="abs" style="left:555.6px;top:90.7px" width="6" height="4" viewBox="0 0 6 4"><path d="M.6.700h4.800L3 3.350z" fill="#555"/></svg>
<span class="t" style="left:550.50px;top:104.80px;font-size:9.8px;color:#595959;transform:scaleX(0.948);">Editing</span>
<div class="abs" style="left:595.4px;top:48.0px;width:1px;height:69.0px;background:#dadada"></div>
<svg class="abs" style="left:634px;top:109px" width="8" height="5" viewBox="0 0 8 5"><path d="M.8 4.300 4 1.100l3.200 3.200" fill="none" stroke="#444" stroke-width="1.400"/></svg>
</div>

<div id="grid">
<div class="hl" style="top:174px"></div><div class="hh" style="top:174px"></div>
<div class="hl" style="top:185px"></div><div class="hh" style="top:185px"></div>
<div class="hl" style="top:196px"></div><div class="hh" style="top:196px"></div>
<div class="hl" style="top:207px"></div><div class="hh" style="top:207px"></div>
<div class="hl" style="top:218px"></div><div class="hh" style="top:218px"></div>
<div class="hl" style="top:229px"></div><div class="hh" style="top:229px"></div>
<div class="hl" style="top:240px"></div><div class="hh" style="top:240px"></div>
<div class="hl" style="top:251px"></div><div class="hh" style="top:251px"></div>
<div class="hl" style="top:262px"></div><div class="hh" style="top:262px"></div>
<div class="hl" style="top:273px"></div><div class="hh" style="top:273px"></div>
<div class="hl" style="top:284px"></div><div class="hh" style="top:284px"></div>
<div class="hl" style="top:295px"></div><div class="hh" style="top:295px"></div>
<div class="hl" style="top:306px"></div><div class="hh" style="top:306px"></div>
<div class="hl" style="top:317px"></div><div class="hh" style="top:317px"></div>
<div class="hl" style="top:328px"></div><div class="hh" style="top:328px"></div>
<div class="hl" style="top:339px"></div><div class="hh" style="top:339px"></div>
<div class="hl" style="top:350px"></div><div class="hh" style="top:350px"></div>
<div class="hl" style="top:361px"></div><div class="hh" style="top:361px"></div>
<div class="hl" style="top:372px"></div><div class="hh" style="top:372px"></div>
<div class="hl" style="top:383px"></div><div class="hh" style="top:383px"></div>
<div class="hl" style="top:394px"></div><div class="hh" style="top:394px"></div>
<div class="hl" style="top:405px"></div><div class="hh" style="top:405px"></div>
<div class="hl" style="top:416px"></div><div class="hh" style="top:416px"></div>
<div class="hl" style="top:427px"></div><div class="hh" style="top:427px"></div>
<div class="hl" style="top:438px"></div><div class="hh" style="top:438px"></div>
<div class="hl" style="top:449px"></div><div class="hh" style="top:449px"></div>
<div class="hl" style="top:460px"></div><div class="hh" style="top:460px"></div>
<div class="vl" style="left:80px"></div>
<div class="vl" style="left:164px"></div>
<div class="vl" style="left:208px"></div>
<div class="vl" style="left:252px"></div>
<div class="vl" style="left:296px"></div>
<div class="vl" style="left:340px"></div>
<div id="wm">Page</div>
<svg class="abs" style="left:239.9px;top:243.93px" width="16" height="29" viewBox="0 0 16 29"><path transform="translate(0 27.672) scale(0.01880 -0.01880)" d="M763 0H583V1147Q518 1085 412.500 1023Q307 961 223 930V1104Q374 1175 487 1276Q600 1377 647 1472H763Z" fill="#8f8f8f"/></svg>
<div class="rh" style="top:164.90px">6</div>
<div class="c ca" style="top:164.2px">Leilani Mathis</div>
<div class="c cb" style="top:164.2px">200 Markham Street</div>
<div class="c n" style="top:164.2px;left:164px;width:43.0px">5</div>
<div class="c n" style="top:164.2px;left:340px;width:40.1px">5</div>
<div class="rh" style="top:175.93px">7</div>
<div class="c ca" style="top:175.23px">June Ford</div>
<div class="c cb" style="top:175.23px">3788 Lake Wales Lane</div>
<div class="c n" style="top:175.23px;left:208px;width:43.0px">1</div>
<div class="c n" style="top:175.23px;left:296px;width:43.0px">1</div>
<div class="c n" style="top:175.23px;left:340px;width:40.1px">2</div>
<div class="rh" style="top:186.96px">8</div>
<div class="c ca" style="top:186.26px">Marisol Colon</div>
<div class="c cb" style="top:186.26px">919 Banyan Boulevard</div>
<div class="c n" style="top:186.26px;left:164px;width:43.0px">3</div>
<div class="c n" style="top:186.26px;left:296px;width:43.0px">4</div>
<div class="c n" style="top:186.26px;left:340px;width:40.1px">7</div>
<div class="rh" style="top:197.99px">9</div>
<div class="c ca" style="top:197.29px">Lee DiMartino</div>
<div class="c cb" style="top:197.29px">1600 Bing Street Apt. 1</div>
<div class="c n" style="top:197.29px;left:208px;width:43.0px">2</div>
<div class="c n" style="top:197.29px;left:340px;width:40.1px">2</div>
<div class="rh" style="top:209.02px">10</div>
<div class="c ca" style="top:208.32px">Wade Schultz</div>
<div class="c cb" style="top:208.32px">3132 Doctors Drive</div>
<div class="c n" style="top:208.32px;left:252px;width:43.0px">2</div>
<div class="c n" style="top:208.32px;left:296px;width:43.0px">2</div>
<div class="c n" style="top:208.32px;left:340px;width:40.1px">4</div>
<div class="rh" style="top:220.05px">11</div>
<div class="c ca" style="top:219.35px">Lance Cano</div>
<div class="c cb" style="top:219.35px">180 Denver Avenue</div>
<div class="c n" style="top:219.35px;left:164px;width:43.0px">1</div>
<div class="c n" style="top:219.35px;left:252px;width:43.0px">1</div>
<div class="c n" style="top:219.35px;left:296px;width:43.0px">5</div>
<div class="c n" style="top:219.35px;left:340px;width:40.1px">7</div>
<div class="rh" style="top:231.08px">12</div>
<div class="c ca" style="top:230.38px">George Howard</div>
<div class="c cb" style="top:230.38px">3826 George Street</div>
<div class="c n" style="top:230.38px;left:164px;width:43.0px">1</div>
<div class="c n" style="top:230.38px;left:208px;width:43.0px">1</div>
<div class="c n" style="top:230.38px;left:252px;width:43.0px">1</div>
<div class="c n" style="top:230.38px;left:340px;width:40.1px">3</div>
<div class="rh" style="top:242.11px">13</div>
<div class="c ca" style="top:241.41px">Eric Lombard</div>
<div class="c cb" style="top:241.41px">1012 Spruce Drive</div>
<div class="c n" style="top:241.41px;left:208px;width:43.0px">2</div>
<div class="c n" style="top:241.41px;left:252px;width:43.0px">3</div>
<div class="c n" style="top:241.41px;left:340px;width:40.1px">5</div>
<div class="rh" style="top:253.14px">14</div>
<div class="c ca" style="top:252.44px">Joseph Trammell</div>
<div class="c cb" style="top:252.44px">2004 Thompson Drive</div>
<div class="c n" style="top:252.44px;left:164px;width:43.0px">5</div>
<div class="c n" style="top:252.44px;left:340px;width:40.1px">5</div>
<div class="rh" style="top:264.17px">15</div>
<div class="c ca" style="top:263.47px">Manuel Gallo</div>
<div class="c cb" style="top:263.47px">3237 Willow Oaks Lane</div>
<div class="c n" style="top:263.47px;left:208px;width:43.0px">1</div>
<div class="c n" style="top:263.47px;left:296px;width:43.0px">1</div>
<div class="c n" style="top:263.47px;left:340px;width:40.1px">2</div>
<div class="rh" style="top:275.20px">16</div>
<div class="c ca" style="top:274.5px">Thomas Strong</div>
<div class="c cb" style="top:274.5px">4575 Stuart Street</div>
<div class="c n" style="top:274.5px;left:208px;width:43.0px">3</div>
<div class="c n" style="top:274.5px;left:252px;width:43.0px">4</div>
<div class="c n" style="top:274.5px;left:340px;width:40.1px">7</div>
<div class="rh" style="top:286.23px">17</div>
<div class="c ca" style="top:285.53px">Rosanna Bennett</div>
<div class="c cb" style="top:285.53px">721 Oliverio Drive</div>
<div class="c n" style="top:285.53px;left:164px;width:43.0px">1</div>
<div class="c n" style="top:285.53px;left:296px;width:43.0px">1</div>
<div class="c n" style="top:285.53px;left:340px;width:40.1px">2</div>
<div class="rh" style="top:297.26px">18</div>
<div class="c ca" style="top:296.56px">Lena Cohan</div>
<div class="c cb" style="top:296.56px">4585 Radford Street</div>
<div class="c n" style="top:296.56px;left:164px;width:43.0px">3</div>
<div class="c n" style="top:296.56px;left:252px;width:43.0px">4</div>
<div class="c n" style="top:296.56px;left:340px;width:40.1px">7</div>
<div class="rh" style="top:308.29px">19</div>
<div class="c ca" style="top:307.59px">Ernest Killion</div>
<div class="c cb" style="top:307.59px">1201 Felosa Drive</div>
<div class="c n" style="top:307.59px;left:208px;width:43.0px">2</div>
<div class="c n" style="top:307.59px;left:340px;width:40.1px">2</div>
<div class="rh" style="top:319.32px">20</div>
<div class="c ca" style="top:318.62px">Gloria Duplessis</div>
<div class="c cb" style="top:318.62px">3628 Abner Road</div>
<div class="c n" style="top:318.62px;left:296px;width:43.0px">1</div>
<div class="c n" style="top:318.62px;left:340px;width:40.1px">1</div>
<div class="rh" style="top:330.35px">21</div>
<div class="c ca" style="top:329.65px">Brandy Lynch</div>
<div class="c cb" style="top:329.65px">4185 Hood Avenue</div>
<div class="c n" style="top:329.65px;left:252px;width:43.0px">4</div>
<div class="c n" style="top:329.65px;left:340px;width:40.1px">4</div>
<div class="rh" style="top:341.38px">22</div>
<div class="c ca" style="top:340.68px">Cory Porter</div>
<div class="c cb" style="top:340.68px">238 Stanton Hollow Road</div>
<div class="c n" style="top:340.68px;left:296px;width:43.0px">2</div>
<div class="c n" style="top:340.68px;left:340px;width:40.1px">2</div>
<div class="rh" style="top:352.41px">23</div>
<div class="c ca" style="top:351.71px">Minnie Spencer</div>
<div class="c cb" style="top:351.71px">4098 Neuport Lane</div>
<div class="c n" style="top:351.71px;left:164px;width:43.0px">1</div>
<div class="c n" style="top:351.71px;left:208px;width:43.0px">1</div>
<div class="c n" style="top:351.71px;left:252px;width:43.0px">1</div>
<div class="c n" style="top:351.71px;left:340px;width:40.1px">3</div>
<div class="rh" style="top:363.44px">24</div>
<div class="c ca" style="top:362.74px">Cynthia McFadden</div>
<div class="c cb" style="top:362.74px">981 Washington Avenue</div>
<div class="c n" style="top:362.74px;left:208px;width:43.0px">2</div>
<div class="c n" style="top:362.74px;left:252px;width:43.0px">3</div>
<div class="c n" style="top:362.74px;left:340px;width:40.1px">5</div>
<div class="rh" style="top:374.47px">25</div>
<div class="c ca" style="top:373.77px">Michael Miller</div>
<div class="c cb" style="top:373.77px">801 Upton Avenue</div>
<div class="c n" style="top:373.77px;left:164px;width:43.0px">5</div>
<div class="c n" style="top:373.77px;left:340px;width:40.1px">5</div>
<div class="rh" style="top:385.50px">26</div>
<div class="c ca" style="top:384.8px">Mary Myers</div>
<div class="c cb" style="top:384.8px">838 Willis Avenue</div>
<div class="c n" style="top:384.8px;left:208px;width:43.0px">1</div>
<div class="c n" style="top:384.8px;left:296px;width:43.0px">1</div>
<div class="c n" style="top:384.8px;left:340px;width:40.1px">2</div>
<div class="rh" style="top:396.53px">27</div>
<div class="c ca" style="top:395.83px">Audrey West</div>
<div class="c cb" style="top:395.83px">838 Caldwell Road</div>
<div class="c n" style="top:395.83px;left:164px;width:43.0px">3</div>
<div class="c n" style="top:395.83px;left:296px;width:43.0px">4</div>
<div class="c n" style="top:395.83px;left:340px;width:40.1px">7</div>
<div class="rh" style="top:407.56px">28</div>
<div class="c ca" style="top:406.86px">Mary Hudson</div>
<div class="c cb" style="top:406.86px">2102 Retreat Avenue</div>
<div class="c n" style="top:406.86px;left:208px;width:43.0px">2</div>
<div class="c n" style="top:406.86px;left:340px;width:40.1px">2</div>
<div class="rh" style="top:418.59px">29</div>
<div class="c ca" style="top:417.89px">Gordon Hayes</div>
<div class="c cb" style="top:417.89px">4881 Stiles Street</div>
<div class="c n" style="top:417.89px;left:296px;width:43.0px">3</div>
<div class="c n" style="top:417.89px;left:340px;width:40.1px">3</div>
<div class="rh" style="top:429.62px">30</div>
<div class="c ca" style="top:428.92px">Randall Kelly</div>
<div class="c cb" style="top:428.92px">4143 Berry Street</div>
<div class="c n" style="top:428.92px;left:164px;width:43.0px">1</div>
<div class="c n" style="top:428.92px;left:252px;width:43.0px">1</div>
<div class="c n" style="top:428.92px;left:296px;width:43.0px">5</div>
<div class="c n" style="top:428.92px;left:340px;width:40.1px">7</div>
<div class="rh" style="top:440.65px">31</div>
<div class="c ca" style="top:439.95px">Brenda Strange</div>
<div class="c cb" style="top:439.95px">3427 Cottrill Lane</div>
<div class="c n" style="top:439.95px;left:164px;width:43.0px">1</div>
<div class="c n" style="top:439.95px;left:208px;width:43.0px">1</div>
<div class="c n" style="top:439.95px;left:252px;width:43.0px">1</div>
<div class="c n" style="top:439.95px;left:340px;width:40.1px">3</div>
<div class="rh" style="top:451.68px">32</div>
<div class="c ca" style="top:450.98px">Deborah Distefano</div>
<div class="c cb" style="top:450.98px">2475 Broadcast Drive</div>
<div class="c n" style="top:450.98px;left:208px;width:43.0px">2</div>
<div class="c n" style="top:450.98px;left:252px;width:43.0px">3</div>
<div class="c n" style="top:450.98px;left:340px;width:40.1px">5</div>
<div id="pb"></div>
</div>
</div>
</body></html>
